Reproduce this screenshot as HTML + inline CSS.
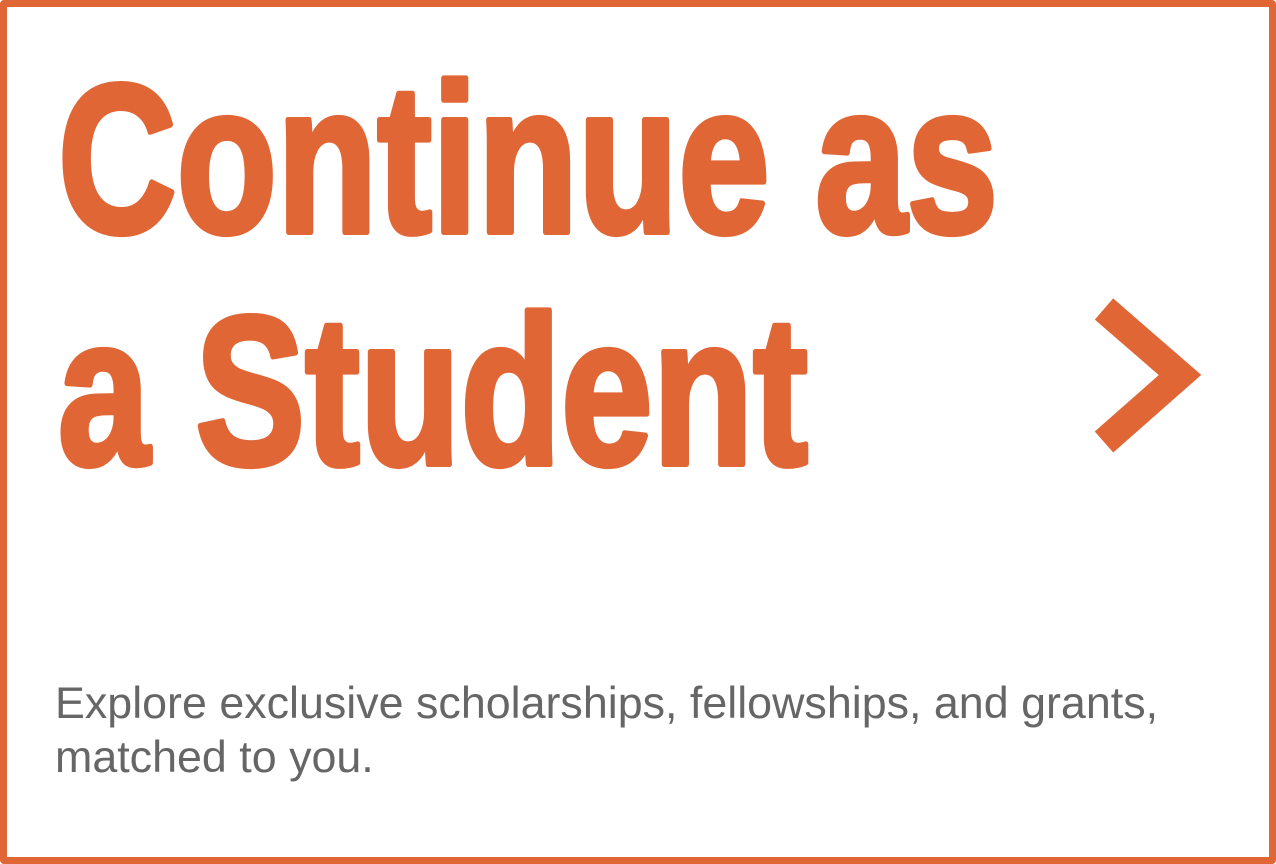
<!DOCTYPE html>
<html><head><style>
html,body{margin:0;padding:0;background:#fff;}
.card{position:absolute;left:0;top:0;width:1276px;height:864px;box-sizing:border-box;border:7px solid #E06636;border-radius:4px;background:#fff;}
.sub{position:absolute;left:55px;top:676px;width:1150px;font-family:"Liberation Sans",sans-serif;font-size:44.8px;line-height:54px;color:#666;}
</style></head><body>
<div class="card"></div>
<svg width="1276" height="864" style="position:absolute;left:0;top:0">
<g font-family="Liberation Sans, sans-serif" font-weight="bold" fill="#E06636" stroke="#E06636" stroke-width="6" stroke-linejoin="round" font-size="212">
<text x="58" y="232" textLength="940" lengthAdjust="spacingAndGlyphs">Continue as</text>
<text x="58" y="464" textLength="750" lengthAdjust="spacingAndGlyphs">a Student</text>
</g>
<polyline points="1104,309 1180,375 1104,442" fill="none" stroke="#E06636" stroke-width="28" stroke-linejoin="miter" stroke-linecap="butt"/>
</svg>
<div class="sub">Explore exclusive scholarships, fellowships, and grants, matched to you.</div>
</body></html>
